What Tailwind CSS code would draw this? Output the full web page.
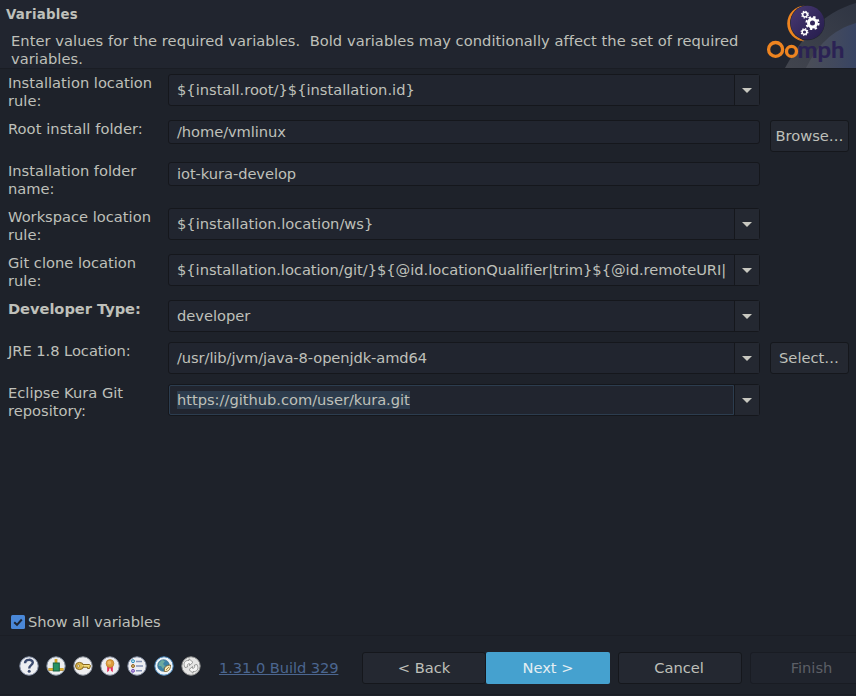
<!DOCTYPE html>
<html lang="en">
<head>
<meta charset="utf-8">
<title>Variables</title>
<script src="https://cdn.jsdelivr.net/npm/@tailwindcss/browser@4"></script>
</head>
<body class="w-[856px] h-[696px] overflow-hidden bg-[#1e222a] text-[#bfc0ba] font-['DejaVu_Sans',sans-serif] text-[14.667px] leading-[18px]">
<div class="flex h-[696px] w-[856px] flex-col overflow-hidden">
  <header class="flex h-[69px] shrink-0 justify-between border-b border-[#1a1d24] bg-[#21252f]">
    <div class="pt-[5px]">
      <h1 class="pt-px pl-[6px] text-[13.333px] tracking-[0.25px] font-bold">Variables</h1>
      <p class="mt-[8px] w-[740px] pl-[11px] tracking-[0.047px] whitespace-pre">Enter values for the required variables.  Bold variables may conditionally affect the set of required
variables.</p>
    </div>
    <svg class="h-[68px] w-[96px] shrink-0" viewBox="0 0 96 68">
      <defs>
        <linearGradient id="sweep" x1="0" y1="0" x2="1" y2="0"><stop offset="0" stop-color="#4b4e57"/><stop offset=".6" stop-color="#41495e"/><stop offset="1" stop-color="#384463"/></linearGradient>
        <linearGradient id="outer" x1="0" y1="1" x2="1" y2="0"><stop offset="0" stop-color="#42454e"/><stop offset="1" stop-color="#2f3543"/></linearGradient>
        <linearGradient id="disc" x1="0" y1="0" x2="1" y2="1"><stop offset="0" stop-color="#493a73"/><stop offset="1" stop-color="#241b4b"/></linearGradient>
      </defs>
      <path d="M25 68C42 37 62 13 96 3V68Z" fill="url(#outer)"/>
      <path d="M46 68C57 46 72 30 96 23V68Z" fill="url(#sweep)"/>
      <path d="M44.400 6A17.600 17.600 0 0 0 44.400 41C34 35.500 27 19 44.400 6Z" fill="#ee8420"/>
      <path d="M45 5.700A17.700 17.700 0 0 0 45 41.300A18 18 0 0 1 45 5.700Z" fill="#ee8420"/>
      <circle cx="47.400" cy="22.900" r="17.400" fill="#21252f"/>
      <circle cx="47.500" cy="22.700" r="16.900" fill="url(#disc)"/>
      <g fill="none" stroke="#fff">
        <circle cx="52.500" cy="23" r="4" stroke-width="3"/><circle cx="52.500" cy="23" r="6.100" stroke-width="2" stroke-dasharray="2.400 2.390"/>
        <circle cx="45" cy="14.600" r="2.300" stroke-width="1.500"/><circle cx="45" cy="14.600" r="3.300" stroke-width="1.300" stroke-dasharray="1.300 1.292"/>
        <circle cx="44.500" cy="32" r="2.300" stroke-width="1.500"/><circle cx="44.500" cy="32" r="3.300" stroke-width="1.300" stroke-dasharray="1.300 1.292"/>
      </g>
      <g fill="none" stroke-width="3.300" stroke="#ee8420">
        <ellipse cx="15.600" cy="49.400" rx="7" ry="6.900"/>
        <circle cx="31.500" cy="51.400" r="5"/>
      </g>
      <text x="37.500" y="57.700" font-family="Lato" font-weight="700" font-size="23" fill="#2b2254" stroke="#2b2254" stroke-width=".2" textLength="47" lengthAdjust="spacingAndGlyphs">mph</text>
    </svg>
  </header>

  <main class="flex h-[567px] shrink-0 flex-col border-b border-[#1b1e25] px-2 pt-[5px]">
    <div class="flex flex-col gap-[10px]">
      <div class="flex h-9 items-start">
        <label class="w-40 shrink-0">Installation location<br>rule:</label>
        <div class="flex h-8 w-[592px] shrink-0 rounded-[3px] border border-[#15171c] bg-[#21252f]">
          <div class="flex-1 overflow-hidden pl-2 leading-[30px] whitespace-nowrap">${install.root/}${installation.id}</div>
          <div class="flex w-[25px] items-center justify-center border-l border-[#15171c] bg-[#242831]"><svg class="h-[5px] w-[10px]" viewBox="0 0 10 5"><path d="M0 0H10L5 5Z" fill="#c8c8c0"/></svg></div>
        </div>
      </div>
      <div class="flex h-8 items-start">
        <label class="w-40 shrink-0 tracking-[0.06px]">Root install folder:</label>
        <div class="h-6 w-[592px] shrink-0 rounded-[3px] border border-[#15171c] bg-[#21252f] pl-2 leading-[22px] tracking-[-0.07px]">/home/vmlinux</div>
        <button class="ml-[10px] h-8 w-[79px] shrink-0 rounded-[3px] border border-[#15171c] bg-[#242831] whitespace-nowrap">Browse…</button>
      </div>
      <div class="flex h-9 items-start">
        <label class="w-40 shrink-0">Installation folder<br>name:</label>
        <div class="h-6 w-[592px] shrink-0 rounded-[3px] border border-[#15171c] bg-[#21252f] pl-2 leading-[22px] tracking-[-0.06px]">iot-kura-develop</div>
      </div>
      <div class="flex h-9 items-start">
        <label class="w-40 shrink-0">Workspace location<br>rule:</label>
        <div class="flex h-8 w-[592px] shrink-0 rounded-[3px] border border-[#15171c] bg-[#21252f]">
          <div class="flex-1 overflow-hidden pl-2 leading-[30px] whitespace-nowrap">${installation.location/ws}</div>
          <div class="flex w-[25px] items-center justify-center border-l border-[#15171c] bg-[#242831]"><svg class="h-[5px] w-[10px]" viewBox="0 0 10 5"><path d="M0 0H10L5 5Z" fill="#c8c8c0"/></svg></div>
        </div>
      </div>
      <div class="flex h-9 items-start">
        <label class="w-40 shrink-0">Git clone location<br>rule:</label>
        <div class="flex h-8 w-[592px] shrink-0 rounded-[3px] border border-[#15171c] bg-[#21252f]">
          <div class="flex-1 overflow-hidden pl-2 leading-[30px] tracking-[-0.025px] whitespace-nowrap">${installation.location/git/}${@id.locationQualifier|trim}${@id.remoteURI|</div>
          <div class="flex w-[25px] items-center justify-center border-l border-[#15171c] bg-[#242831]"><svg class="h-[5px] w-[10px]" viewBox="0 0 10 5"><path d="M0 0H10L5 5Z" fill="#c8c8c0"/></svg></div>
        </div>
      </div>
      <div class="flex h-8 items-start">
        <label class="w-40 shrink-0 font-bold tracking-[-0.05px]">Developer Type:</label>
        <div class="flex h-8 w-[592px] shrink-0 rounded-[3px] border border-[#15171c] bg-[#21252f]">
          <div class="flex-1 overflow-hidden pl-2 leading-[30px] whitespace-nowrap">developer</div>
          <div class="flex w-[25px] items-center justify-center border-l border-[#15171c] bg-[#242831]"><svg class="h-[5px] w-[10px]" viewBox="0 0 10 5"><path d="M0 0H10L5 5Z" fill="#c8c8c0"/></svg></div>
        </div>
      </div>
      <div class="flex h-8 items-start">
        <label class="w-40 shrink-0 tracking-[-0.04px]">JRE 1.8 Location:</label>
        <div class="flex h-8 w-[592px] shrink-0 rounded-[3px] border border-[#15171c] bg-[#21252f]">
          <div class="flex-1 overflow-hidden pl-2 leading-[30px] tracking-[-0.09px] whitespace-nowrap">/usr/lib/jvm/java-8-openjdk-amd64</div>
          <div class="flex w-[25px] items-center justify-center border-l border-[#15171c] bg-[#242831]"><svg class="h-[5px] w-[10px]" viewBox="0 0 10 5"><path d="M0 0H10L5 5Z" fill="#c8c8c0"/></svg></div>
        </div>
        <button class="ml-[10px] h-8 w-[79px] shrink-0 rounded-[3px] border border-[#15171c] bg-[#242831] pr-px whitespace-nowrap">Select…</button>
      </div>
      <div class="flex h-9 items-start">
        <label class="w-40 shrink-0">Eclipse Kura Git<br>repository:</label>
        <div class="flex h-8 w-[592px] shrink-0 rounded-[3px] border border-[#15171c] bg-[#21252f]">
          <div class="flex flex-1 items-center overflow-hidden rounded-l-[2px] border border-[#2c3d4f] pl-[7px] whitespace-nowrap"><span class="bg-[#2d3c4d] tracking-[-0.02px]">https://github.com/user/kura.git</span></div>
          <div class="flex w-[25px] items-center justify-center border-l border-[#15171c] bg-[#242831]"><svg class="h-[5px] w-[10px]" viewBox="0 0 10 5"><path d="M0 0H10L5 5Z" fill="#c8c8c0"/></svg></div>
        </div>
      </div>
    </div>
    <label class="mt-auto mb-[4px] ml-[3px] flex items-center">
      <svg class="mr-[3px] h-[14px] w-[14px]" viewBox="0 0 14 14"><rect width="14" height="14" rx="1.500" fill="#4a88d8"/><path d="M3.200 7.200L6 9.800L10.800 4.500" fill="none" stroke="#1e2633" stroke-width="2"/></svg>
      <span>Show all variables</span>
    </label>
  </main>

  <footer class="flex h-[59px] shrink-0 items-start border-b border-[#1a1d24] pt-[16px] pl-[19px]">
    <div class="flex w-[200px] shrink-0 gap-[7px] pt-[4px]">
      <svg class="h-5 w-5" viewBox="0 0 20 20"><circle cx="10" cy="10" r="9.200" fill="#eeeff2" stroke="#8994aa"/><path d="M6 7.200C6 2.800 13.800 2.800 13.800 6.600C13.800 9.300 10.200 9 10.200 12.400" fill="none" stroke="#3d4c70" stroke-width="2.400"/><circle cx="10.200" cy="15.300" r="1.500" fill="#3d4c70"/></svg>
      <svg class="h-5 w-5" viewBox="0 0 20 20"><circle cx="10" cy="10" r="9.200" fill="#eeeff0" stroke="#8795a5"/><path d="M10 3V8M2.500 13.500H17.500" stroke="#a87b0b" stroke-width="2.600"/><path d="M10 3V8M2.500 13.200H17.500" stroke="#e8b72b" stroke-width="1.400"/><rect x="7.300" y="7" width="6" height="8" fill="#289263" stroke="#176244"/></svg>
      <svg class="h-5 w-5" viewBox="0 0 20 20"><circle cx="10" cy="10" r="9.200" fill="#efeff0" stroke="#8e959f"/><path d="M9 8.500H16.500L17.500 9.700L16.500 12.500H14.500V11.200H9Z" fill="#edcf60" stroke="#86661d"/><ellipse cx="6.500" cy="10" rx="4" ry="3.600" fill="#dfbc4e" stroke="#86661d"/><circle cx="5.300" cy="10" r="1.200" fill="#fff" stroke="#86661d" stroke-width=".7"/><path d="M9 9.800H16" stroke="#f9e68e"/></svg>
      <svg class="h-5 w-5" viewBox="0 0 20 20"><circle cx="10" cy="10" r="9.200" fill="#eeeef1" stroke="#8d94a4"/><path d="M7.200 10H12.800V16.200L10.800 14.500V12.500H9.200V14.500L7.200 16.200Z" fill="#e72d5b"/><circle cx="10" cy="7.500" r="3.900" fill="#dd9d3c" stroke="#b87b28" stroke-width=".7"/><circle cx="9.300" cy="6.700" r="1.900" fill="#edbc6b"/></svg>
      <svg class="h-5 w-5" viewBox="0 0 20 20"><circle cx="10" cy="10" r="9.200" fill="#eeeff2" stroke="#8590a5"/><path d="M9 5.500H15M9 10H16M9 14.800H15" stroke="#8492b5" stroke-width="1.500"/><circle cx="6" cy="5.200" r="1.500" fill="#b5e5f4" stroke="#328fba"/><circle cx="6" cy="10" r="1.500" fill="#d9b66e" stroke="#8d6627"/><circle cx="6" cy="14.800" r="1.500" fill="#b7a0e0" stroke="#7650b8"/></svg>
      <svg class="h-5 w-5" viewBox="0 0 20 20"><circle cx="10" cy="10" r="9.200" fill="#edf4f8" stroke="#4787bd"/><circle cx="9.500" cy="9.500" r="5.800" fill="#3c82a6" stroke="#356888" stroke-width=".7"/><path d="M5 7L8 4L11 5L9 8L11 10L9 13L7 10L4.500 10Z" fill="#6caaa0"/><path d="M10.500 15.500C9.500 11.500 12 9.300 16.500 9C16.800 13 14.500 16 10.500 15.500Z" fill="#f7eabb" stroke="#76581c" stroke-width=".8"/><path d="M12 14L15 11" stroke="#9b7428" stroke-width=".8"/></svg>
      <svg class="h-5 w-5" viewBox="0 0 20 20"><circle cx="10" cy="10" r="9.200" fill="#e5e5e4" stroke="#909190"/><g fill="#f5f5f4" stroke="#858785" stroke-width=".8"><path d="M4 11.500C1.800 7 4 4 8 4.500V2.800L12 6.300L8.500 9.500V7.700C6.500 7.500 6 9 6.500 11Z"/><path d="M16 8.500C18.200 13 16 16 12 15.500V17.200L8 13.700L11.500 10.500V12.300C13.500 12.500 14 11 13.500 9Z"/></g></svg>
    </div>
    <div class="w-[143px] shrink-0 pt-[7px]"><a class="text-[#4b6690] tracking-[-0.08px] underline underline-offset-[1px]">1.31.0 Build 329</a></div>
    <button class="h-8 w-[124px] shrink-0 rounded-[3px] border border-[#15171c] bg-[#242831]">&lt; Back</button>
    <button class="h-8 w-[124px] shrink-0 rounded-[2px] bg-[#45a1cf] text-[#e4eef2]">Next &gt;</button>
    <button class="ml-2 h-8 w-[124px] shrink-0 rounded-[3px] border border-[#15171c] bg-[#242831] pr-[2px]">Cancel</button>
    <button class="ml-2 h-8 w-[124px] shrink-0 rounded-[3px] border border-[#191c23] bg-[#20242d] pr-px text-[#5c5f66]">Finish</button>
  </footer>
</div>
</body>
</html>
